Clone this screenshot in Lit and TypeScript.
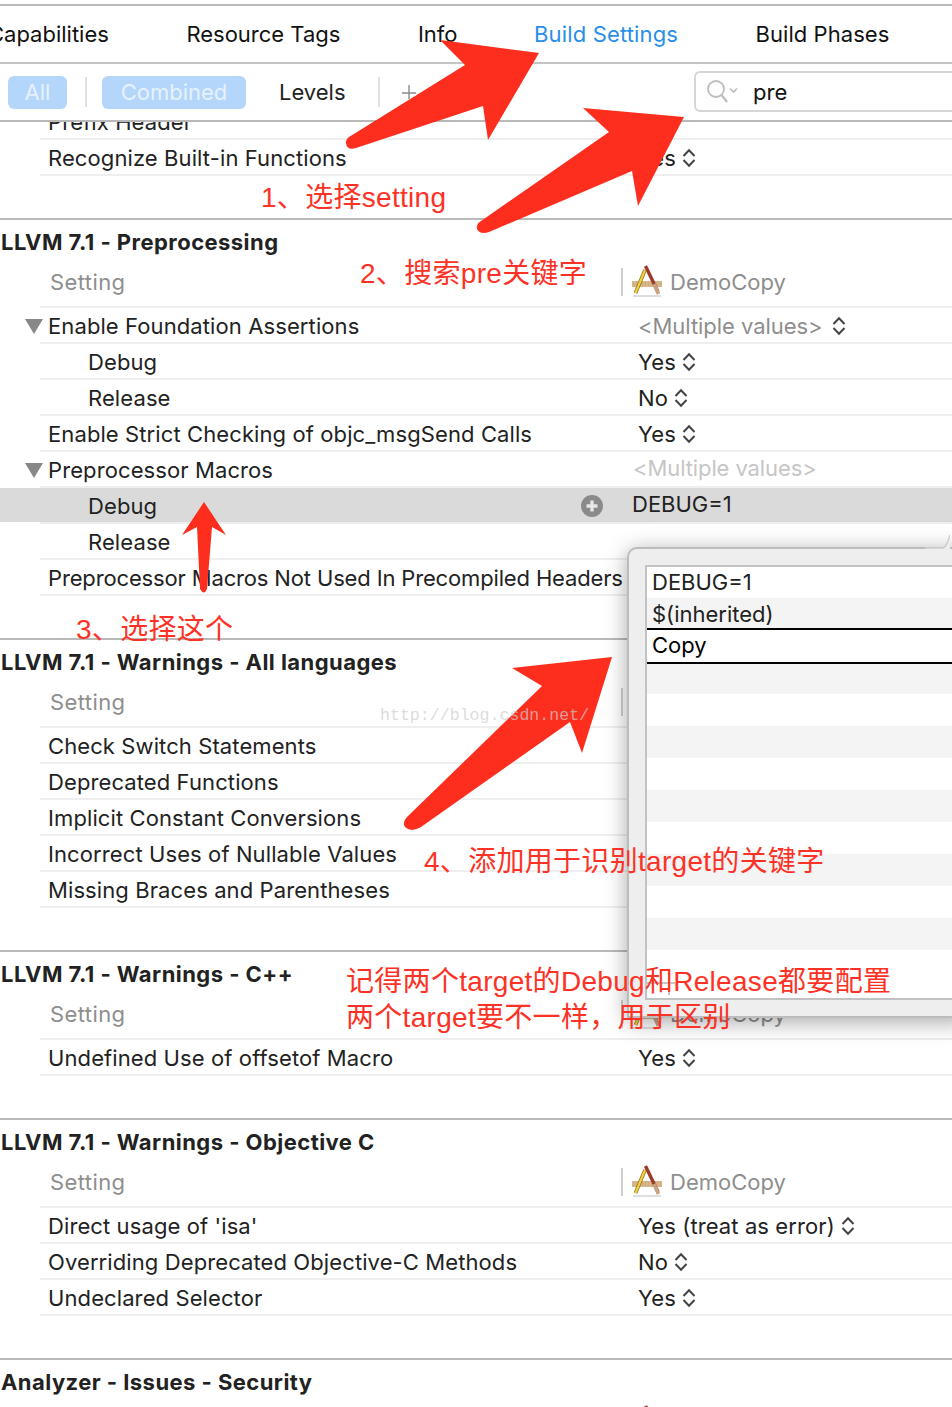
import { LitElement, html, css, svg } from "lit";
import { customElement } from "lit/decorators.js";

type Row = { name: string; value?: string; chev?: boolean; child?: boolean; open?: boolean; muted?: boolean; raw?: boolean; sel?: boolean; tight?: boolean };
type Section = { title: string; head?: boolean; rows: Row[] };

const yes = (name: string, value = "Yes"): Row => ({ name, value, chev: true });

const sections: Section[] = [
  {
    title: "LLVM 7.1 - Preprocessing",
    head: true,
    rows: [
      { name: "Enable Foundation Assertions", value: "<Multiple values>", chev: true, open: true, muted: true },
      { name: "Debug", value: "Yes", chev: true, child: true },
      { name: "Release", value: "No", chev: true, child: true },
      yes("Enable Strict Checking of objc_msgSend Calls"),
      { name: "Preprocessor Macros", value: "<Multiple values>", open: true, muted: true, raw: true },
      { name: "Debug", value: "DEBUG=1", child: true, raw: true, sel: true },
      { name: "Release", child: true },
      { name: "Preprocessor Macros Not Used In Precompiled Headers", tight: true },
    ],
  },
  {
    title: "LLVM 7.1 - Warnings - All languages",
    head: true,
    rows: [
      { name: "Check Switch Statements" },
      { name: "Deprecated Functions" },
      { name: "Implicit Constant Conversions" },
      { name: "Incorrect Uses of Nullable Values" },
      { name: "Missing Braces and Parentheses" },
    ],
  },
  {
    title: "LLVM 7.1 - Warnings - C++",
    head: true,
    rows: [yes("Undefined Use of offsetof Macro")],
  },
  {
    title: "LLVM 7.1 - Warnings - Objective C",
    head: true,
    rows: [
      yes("Direct usage of 'isa'", "Yes (treat as error)"),
      yes("Overriding Deprecated Objective-C Methods", "No"),
      yes("Undeclared Selector"),
    ],
  },
  { title: "Analyzer - Issues - Security", head: true, rows: [] },
];

const chevron = html`<svg class="chev" viewBox="0 0 14 20" width="14" height="20">
  <path d="M1.5 8 7 2.2 12.5 8M1.5 12 7 17.8 12.5 12" fill="none" stroke="#444" stroke-width="2" />
</svg>`;

const xcodeIcon = html`<svg class="xc" viewBox="0 0 30 32" width="30" height="32">
  <rect x="0" y="16" width="30" height="6" fill="#d8b78a" />
  <path d="M1 18h28M1 20h28" stroke="#b58f5f" stroke-width=".6" stroke-dasharray="1 2" />
  <path d="M1 31 29 31" stroke="#bdbdbd" stroke-width="1" />
  <path d="M13 5 3.5 28" stroke="#8a6d1a" stroke-width="3.6" />
  <path d="M13 5 3.5 28" stroke="#f2cf3c" stroke-width="2.2" />
  <path d="M13.5 1 26 27" stroke="#9d3a2e" stroke-width="3.4" />
  <path d="M22 19 26.5 29" stroke="#c9a283" stroke-width="3.6" />
</svg>`;

const arrows = [
  "M349 137 465 65 440 40 539 53 488 140 483 106 356 148Q347 151 346 143 345 140 349 137Z",
  "M481 221 609 132 583 108 684 117 638 206 632 171 489 232Q480 235 477 229 476 224 481 221Z",
  "M204 502 226 535 212 527 207 589Q204 596 200 589L197 527 182 535Z",
  "M407 817 542 686 512 668 612 657 582 753 570 722 421 827Q411 833 405 827 402 822 407 817Z",
];

const notes = [
  { t: "1、选择setting", x: 261, y: 196 },
  { t: "2、搜索pre关键字", x: 360, y: 272 },
  { t: "3、选择这个", x: 76, y: 628 },
  { t: "4、添加用于识别target的关键字", x: 424, y: 860 },
  { t: "记得两个target的Debug和Release都要配置", x: 346, y: 980 },
  { t: "两个target要不一样，用于区别", x: 346, y: 1016 },
];

@customElement("app-root")
export class AppRoot extends LitElement {
  static styles = css`
    :host {
      display: block;
      position: relative;
      width: 952px;
      height: 1407px;
      overflow: hidden;
      background: #fff;
      font-family: Inter, "Noto Sans", sans-serif;
      font-size: 22px;
      color: #222;
    }
    .tabs {
      margin-top: 4px;
      height: 56px;
      border-top: 2px solid #b9b9b9;
      border-bottom: 2px solid #c4c4c4;
      display: flex;
      align-items: center;
      gap: 77.5px;
      margin-left: -12px;
      white-space: nowrap;
      color: #111;
    }
    .tabs .on { color: #2a8fe6; letter-spacing: 0.15px; margin-left: -1px; }
    .tabs .last { letter-spacing: 0.05px; }
    .filter {
      height: 56px;
      border-bottom: 2px solid #b9b9b9;
      display: flex;
      align-items: center;
      padding-left: 8px;
      overflow: hidden;
      white-space: nowrap;
    }
    .pill {
      height: 33px;
      background: #b4d6fb;
      color: #e6f1fd;
      border-radius: 6px;
      display: flex;
      align-items: center;
      justify-content: center;
    }
    .all { width: 59px; }
    .comb { width: 144px; margin-left: 15px; }
    .sep { width: 2px; height: 30px; background: #e0e0e0; flex: none; }
    .sep.a { margin-left: 18px; }
    .levels { margin-left: 33px; width: 65px; }
    .sep.b { margin-left: 34px; }
    .plus { margin-left: 22px; flex: none; }
    .search {
      margin-left: auto;
      margin-right: -14px;
      margin-bottom: 1px;
      width: 272px;
      height: 41px;
      flex: none;
      box-sizing: border-box;
      border: 2px solid #d6d6d6;
      border-radius: 6px;
      display: flex;
      align-items: center;
      gap: 15px;
      padding-left: 10px;
      color: #111;
    }
    .search svg { flex: none; }
    .clip { height: 18px; overflow: hidden; padding-left: 40px; }
    .clip > div {
      height: 16px;
      border-bottom: 2px solid #eee;
      overflow: hidden;
    }
    .clip span { display: block; margin-top: -17px; line-height: 34px; padding-left: 8px; letter-spacing: 0.1px; }
    .row { display: flex; height: 36px; }
    .row.sel {
      background: linear-gradient(#dadada, #dadada) no-repeat;
      background-size: 100% 34px;
    }
    .gutter { width: 40px; flex: none; box-sizing: border-box; padding-left: 25px; display: flex; align-items: center; }
    .gutter svg { flex: none; overflow: visible; }
    .cells {
      flex: 1;
      display: flex;
      align-items: center;
      box-sizing: border-box;
      padding-top: 2px;
      border-bottom: 2px solid #eee;
      min-width: 0;
      white-space: nowrap;
      letter-spacing: 0.1px;
    }
    .name { width: 590px; flex: none; box-sizing: border-box; padding: 0 27px 0 8px; display: flex; align-items: center; justify-content: space-between; }
    .name.child { padding-left: 48px; }
    .name.tight { letter-spacing: -0.15px; }
    .val { display: flex; align-items: center; padding-left: 8px; gap: 6px; }
    .val.raw { padding-left: 2px; padding-bottom: 4px; letter-spacing: 0; }
    .val.muted { color: #8e8e8e; letter-spacing: -0.05px; gap: 9px; }
    .val.raw.muted { padding-left: 3px; color: #c6c6c6; letter-spacing: -0.1px; }
    .gap { height: 42px; }
    .line { height: 2px; background: #b9b9b9; }
    .title { height: 44px; line-height: 44px; padding-left: 1px; font-weight: 700; white-space: nowrap; letter-spacing: 0.45px; }
    .head {
      margin-left: 40px;
      height: 44px;
      box-sizing: border-box;
      border-bottom: 2px solid #eee;
      padding-bottom: 6px;
      display: flex;
      align-items: center;
      color: #8e8e8e;
    }
    .head .lbl { width: 581px; flex: none; padding-left: 10px; box-sizing: border-box; letter-spacing: 0.4px; }
    .head .div { width: 2px; height: 28px; background: #cfcfcf; flex: none; }
    .head .xc { margin: -2px 8px 0 9px; flex: none; }
    .popup {
      position: absolute;
      left: 627px;
      top: 547px;
      width: 340px;
      height: 471px;
      box-sizing: border-box;
      background: #eee;
      border: 2px solid #bcbcbc;
      border-radius: 10px 0 0 0;
      box-shadow: 0 4px 22px rgba(0, 0, 0, 0.35);
      padding: 16px 0 16px 16px;
      display: flex;
    }
    .notch { position: absolute; left: 296px; top: -25px; }
    .table {
      position: relative;
      flex: 1;
      background: #fff;
      border: 2px solid #c2c2c2;
      border-right: 0;
      display: flex;
      flex-direction: column;
    }
    .cell { padding-left: 5px; display: flex; align-items: center; flex: none; box-sizing: border-box; }
    .cell.first { padding-bottom: 1px; }
    .cell.stripe { background: #f4f4f4; }
    .cell.inh { padding-top: 2px; }
    .cell.edit { border-top: 2px solid #000; border-bottom: 2px solid #000; color: #000; padding-bottom: 2px; }
    .add { position: absolute; left: 0; bottom: 1px; }
    .ink { position: absolute; left: 0; top: 0; pointer-events: none; }
    .note {
      position: absolute;
      color: #fd3226;
      font-family: "Liberation Sans", "Noto Sans CJK SC", sans-serif;
      font-size: 28px;
      line-height: 40px;
      letter-spacing: 0.3px;
      white-space: nowrap;
      pointer-events: none;
    }
    .mark {
      position: absolute;
      left: 380px;
      top: 704px;
      font-family: "Liberation Mono", monospace;
      font-size: 16.6px;
      line-height: 24px;
      color: rgba(205, 205, 205, 0.7);
      white-space: nowrap;
    }
  `;

  private renderRow(r: Row) {
    return html`<div class="row ${r.sel ? "sel" : ""}">
      <div class="gutter">
        ${r.open
          ? html`<svg width="18" height="15" viewBox="0 0 18 15"><path d="M0 0H18L9 15Z" fill="#888" /></svg>`
          : ""}
      </div>
      <div class="cells">
        <div class="name ${r.child ? "child" : ""} ${r.tight ? "tight" : ""}">
          <span>${r.name}</span>
          ${r.sel
            ? html`<svg width="22" height="22" viewBox="0 0 22 22">
                <circle cx="11" cy="11" r="11" fill="#8a8a8c" />
                <path d="M11 5.5v11M5.5 11h11" stroke="#e6e6e6" stroke-width="3.4" />
              </svg>`
            : ""}
        </div>
        ${r.value
          ? html`<div class="val ${r.muted ? "muted" : ""} ${r.raw ? "raw" : ""}">
              <span>${r.value}</span>${r.chev ? chevron : ""}
            </div>`
          : ""}
      </div>
    </div>`;
  }

  private renderSection(s: Section) {
    return html`<div class="gap"></div>
      <div class="line"></div>
      <div class="title">${s.title}</div>
      <div class="head">
        <span class="lbl">Setting</span><span class="div"></span>${xcodeIcon}<span>DemoCopy</span>
      </div>
      ${s.rows.map((r) => this.renderRow(r))}`;
  }

  render() {
    const stripes = [30, 32, 32, 32, 32, 32, 32, 32, 32, 48];
    return html`
      <div class="tabs">
        <span>Capabilities</span><span>Resource Tags</span><span>Info</span><span class="on">Build Settings</span><span class="last">Build Phases</span>
      </div>
      <div class="filter">
        <div class="pill all">All</div>
        <div class="sep a"></div>
        <div class="pill comb">Combined</div>
        <div class="levels">Levels</div>
        <div class="sep b"></div>
        <svg class="plus" width="14" height="14" viewBox="0 0 14 14"><path d="M7 0v14M0 8h14" stroke="#8a8a8a" stroke-width="1.4" /></svg>
        <div class="search">
          <svg width="32" height="26" viewBox="0 0 32 26">
            <circle cx="10" cy="10" r="8" fill="none" stroke="#bdbdbd" stroke-width="1.8" />
            <path d="M15.5 16 21 23" stroke="#bdbdbd" stroke-width="2.2" />
            <path d="M24 9.5 27.5 13 31 9.5" fill="none" stroke="#bdbdbd" stroke-width="1.6" />
          </svg>
          <span>pre</span>
        </div>
      </div>
      <div class="clip"><div><span>Prefix Header</span></div></div>
      ${this.renderRow(yes("Recognize Built-in Functions"))}
      ${sections.map((s) => this.renderSection(s))}

      <div class="popup">
        <svg class="notch" width="25" height="26" viewBox="0 0 25 26">
          <path d="M0 24H18C21 24 23 18 25 11V26H0Z" fill="#eee" />
          <path d="M0 24H18C21 24 23 18 25 11" fill="none" stroke="#cdcdcd" stroke-width="1.5" />
        </svg>
        <div class="table">
          <div class="cell first" style="height:31px">DEBUG=1</div>
          <div class="cell stripe inh" style="height:30px">$(inherited)</div>
          <div class="cell edit" style="height:36px">Copy</div>
          ${stripes.map((h, i) => html`<div class="cell ${i % 2 === 0 ? "stripe" : ""}" style="height:${h}px"></div>`)}
          <svg class="add" width="30" height="30" viewBox="0 0 30 30">
            <path d="M0 16H28M22 2V28" stroke="#b4b4b4" stroke-width="1.5" />
          </svg>
        </div>
      </div>

      <svg class="ink" width="952" height="1407" viewBox="0 0 952 1407">
        ${arrows.map((d) => svg`<path d=${d} fill="#fe2e1e" />`)}
      </svg>
      <div class="mark">http://blog.csdn.net/</div>
      ${notes.map((n) => html`<div class="note" style="left:${n.x}px;top:${n.y - 18}px">${n.t}</div>`)}
    `;
  }
}
